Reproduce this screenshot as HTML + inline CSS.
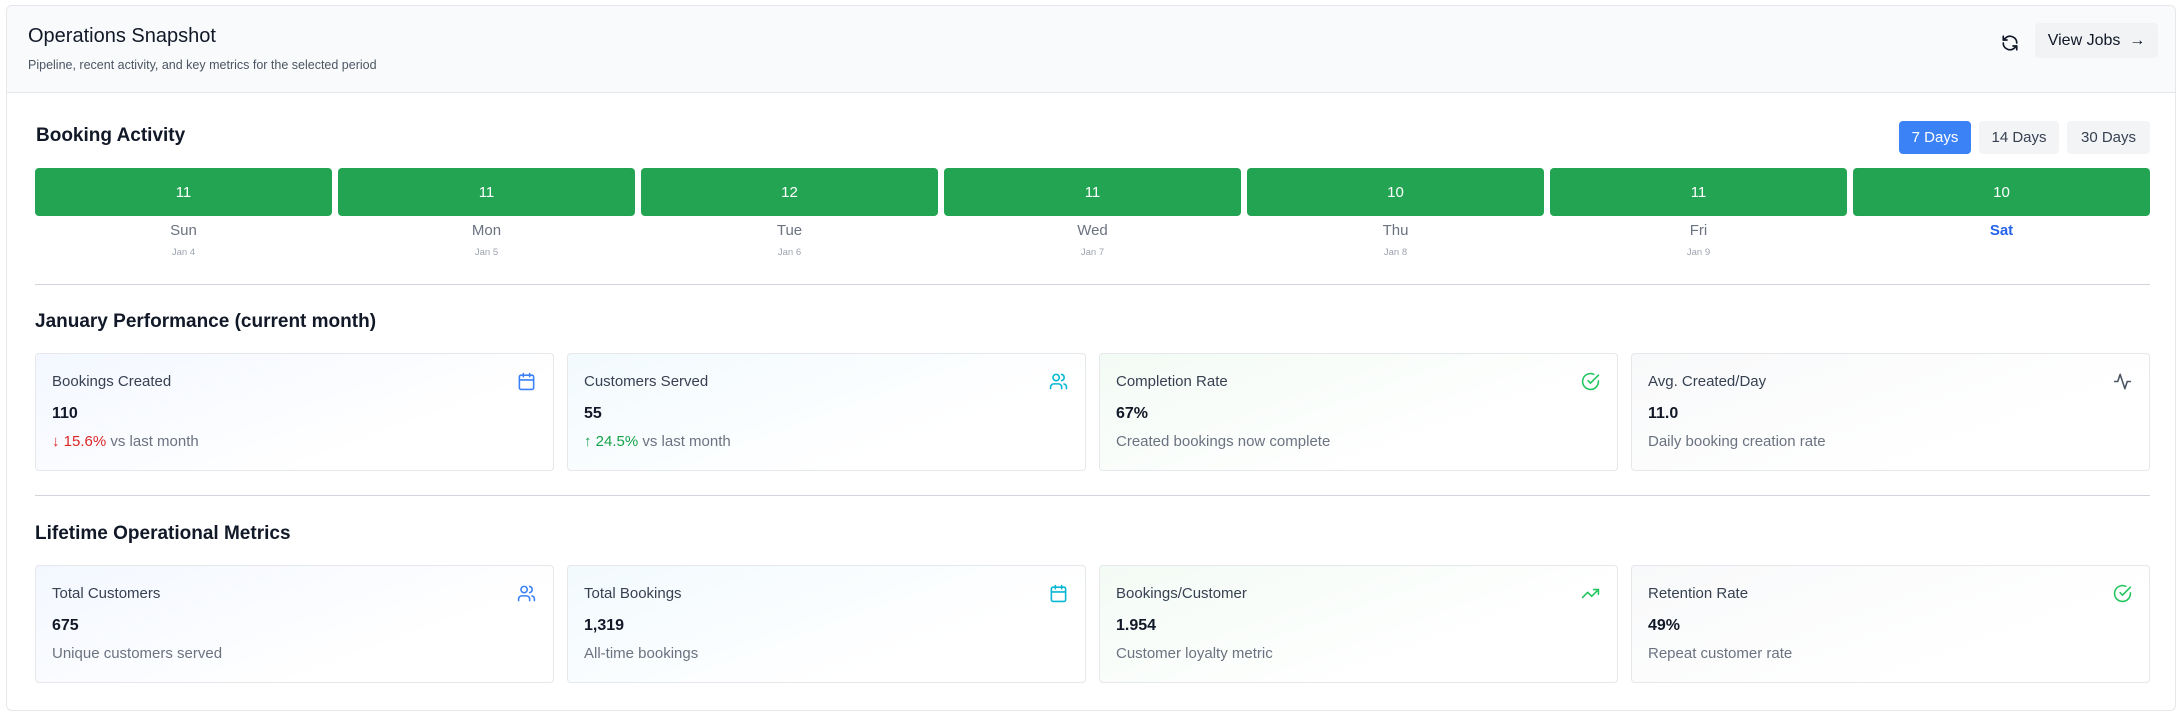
<!DOCTYPE html>
<html><head><meta charset="utf-8"><style>
*{box-sizing:border-box;margin:0;padding:0}
body{width:2182px;height:716px;background:#fff;font-family:"Liberation Sans",sans-serif;color:#111827;position:relative;overflow:hidden}
.outer{position:absolute;left:6px;top:5px;width:2170px;height:706px;border:1px solid #e5e7eb;border-radius:6px;overflow:hidden}
.hdr{position:absolute;left:0;top:0;right:0;height:87px;background:#f9fafb;border-bottom:1px solid #e5e7eb}
.abs{position:absolute}
.h1{font-size:20px;color:#111827}
.sub{font-size:12.5px;color:#4b5563}
.sec{font-size:19px;font-weight:bold;color:#111827}
.btn{position:absolute;height:33px;border-radius:4px;font-size:15px;display:flex;align-items:center;justify-content:center}
.bar{position:absolute;top:168px;height:48px;width:297px;background:#23a452;border-radius:4px;color:#fff;font-size:15px;display:flex;align-items:center;justify-content:center}
.day{position:absolute;top:222px;width:297px;text-align:center;font-size:15px;color:#6b7280}
.dt{position:absolute;top:247px;width:297px;text-align:center;font-size:9.5px;color:#9ca3af}
.div{position:absolute;left:35px;width:2115px;height:1px;background:#d1d5db}
.card{position:absolute;width:519px;height:118px;border:1px solid #e5e7eb;border-radius:4px}
.card .l{position:absolute;left:16px;top:19px;font-size:15px;color:#374151}
.card .v{position:absolute;left:16px;top:51px;font-size:16px;font-weight:bold;color:#111827}
.card .s{position:absolute;left:16px;top:79px;font-size:15px;color:#6b7280}
.card svg{position:absolute;right:17px;top:18px}
</style></head><body>
<div class="outer">
 <div class="hdr">
  <div class="abs h1" style="left:21px;top:19px">Operations Snapshot</div>
  <div class="abs sub" style="left:21px;top:52px">Pipeline, recent activity, and key metrics for the selected period</div>
  <svg class="abs" style="left:1994px;top:28px" width="18" height="18" viewBox="0 0 24 24" fill="none" stroke="#111827" stroke-width="2.2" stroke-linecap="round" stroke-linejoin="round"><path d="M21 12a9 9 0 0 0-15-6.7L3 8"/><path d="M3 3v5h5"/><path d="M3 12a9 9 0 0 0 15 6.7L21 16"/><path d="M16 16h5v5"/></svg>
  <div class="btn" style="left:2028px;top:17px;width:123px;height:35px;background:#f1f3f5;color:#111827;font-size:16px">View Jobs&nbsp;&nbsp;→</div>
 </div>
 <div class="abs sec" style="left:29px;top:119px">Booking Activity</div>
 <div class="btn" style="left:1892px;top:115px;width:72px;background:#3b82f6;color:#fff">7 Days</div>
 <div class="btn" style="left:1972px;top:115px;width:80px;background:#f3f4f6;color:#374151">14 Days</div>
 <div class="btn" style="left:2060px;top:115px;width:83px;background:#f3f4f6;color:#374151">30 Days</div>
</div>
<div class="bar" style="left:35px">11</div>
<div class="bar" style="left:338px">11</div>
<div class="bar" style="left:641px">12</div>
<div class="bar" style="left:944px">11</div>
<div class="bar" style="left:1247px">10</div>
<div class="bar" style="left:1550px">11</div>
<div class="bar" style="left:1853px">10</div>
<div class="day" style="left:35px">Sun</div><div class="dt" style="left:35px">Jan 4</div>
<div class="day" style="left:338px">Mon</div><div class="dt" style="left:338px">Jan 5</div>
<div class="day" style="left:641px">Tue</div><div class="dt" style="left:641px">Jan 6</div>
<div class="day" style="left:944px">Wed</div><div class="dt" style="left:944px">Jan 7</div>
<div class="day" style="left:1247px">Thu</div><div class="dt" style="left:1247px">Jan 8</div>
<div class="day" style="left:1550px">Fri</div><div class="dt" style="left:1550px">Jan 9</div>
<div class="day" style="left:1853px;color:#2563eb;font-weight:bold">Sat</div>
<div class="div" style="top:284px"></div>
<div class="abs sec" style="left:35px;top:311px">January Performance (current month)</div>
<div class="card" style="left:35px;top:353px;background:linear-gradient(160deg,#f3f7ff,#fff 70%)"><div class="l">Bookings Created</div><div class="v">110</div><div class="s"><span style="color:#dc2626">↓ 15.6%</span> vs last month</div>
<svg width="19" height="19" viewBox="0 0 24 24" fill="none" stroke="#3b82f6" stroke-width="2" stroke-linecap="round"><rect x="3" y="4" width="18" height="18" rx="2"/><path d="M16 2v4M8 2v4M3 10h18"/></svg></div>
<div class="card" style="left:567px;top:353px;background:linear-gradient(160deg,#f2fafe,#fff 70%)"><div class="l">Customers Served</div><div class="v">55</div><div class="s"><span style="color:#16a34a">↑ 24.5%</span> vs last month</div>
<svg width="19" height="19" viewBox="0 0 24 24" fill="none" stroke="#06b6d4" stroke-width="2" stroke-linecap="round"><path d="M16 21v-2a4 4 0 0 0-4-4H6a4 4 0 0 0-4 4v2"/><circle cx="9" cy="7" r="4"/><path d="M22 21v-2a4 4 0 0 0-3-3.9M16 3.1a4 4 0 0 1 0 7.8"/></svg></div>
<div class="card" style="left:1099px;top:353px;background:linear-gradient(160deg,#f3fbf5,#fff 70%)"><div class="l">Completion Rate</div><div class="v">67%</div><div class="s">Created bookings now complete</div>
<svg width="19" height="19" viewBox="0 0 24 24" fill="none" stroke="#22c55e" stroke-width="2" stroke-linecap="round"><path d="M22 11.1V12a10 10 0 1 1-5.9-9.1"/><path d="M22 4 12 14l-3-3"/></svg></div>
<div class="card" style="left:1631px;top:353px;background:linear-gradient(160deg,#f8f9fa,#fff 70%)"><div class="l">Avg. Created/Day</div><div class="v">11.0</div><div class="s">Daily booking creation rate</div>
<svg width="19" height="19" viewBox="0 0 24 24" fill="none" stroke="#4b5563" stroke-width="2" stroke-linecap="round" stroke-linejoin="round"><path d="M22 12h-4l-3 9L9 3l-3 9H2"/></svg></div>
<div class="div" style="top:495px"></div>
<div class="abs sec" style="left:35px;top:523px">Lifetime Operational Metrics</div>
<div class="card" style="left:35px;top:565px;background:linear-gradient(160deg,#f3f7ff,#fff 70%)"><div class="l">Total Customers</div><div class="v">675</div><div class="s">Unique customers served</div>
<svg width="19" height="19" viewBox="0 0 24 24" fill="none" stroke="#3b82f6" stroke-width="2" stroke-linecap="round"><path d="M16 21v-2a4 4 0 0 0-4-4H6a4 4 0 0 0-4 4v2"/><circle cx="9" cy="7" r="4"/><path d="M22 21v-2a4 4 0 0 0-3-3.9M16 3.1a4 4 0 0 1 0 7.8"/></svg></div>
<div class="card" style="left:567px;top:565px;background:linear-gradient(160deg,#f2fafe,#fff 70%)"><div class="l">Total Bookings</div><div class="v">1,319</div><div class="s">All-time bookings</div>
<svg width="19" height="19" viewBox="0 0 24 24" fill="none" stroke="#06b6d4" stroke-width="2" stroke-linecap="round"><rect x="3" y="4" width="18" height="18" rx="2"/><path d="M16 2v4M8 2v4M3 10h18"/></svg></div>
<div class="card" style="left:1099px;top:565px;background:linear-gradient(160deg,#f3fbf5,#fff 70%)"><div class="l">Bookings/Customer</div><div class="v">1.954</div><div class="s">Customer loyalty metric</div>
<svg width="19" height="19" viewBox="0 0 24 24" fill="none" stroke="#22c55e" stroke-width="2" stroke-linecap="round" stroke-linejoin="round"><path d="M22 7 13.5 15.5 8.5 10.5 2 17"/><path d="M16 7h6v6"/></svg></div>
<div class="card" style="left:1631px;top:565px;background:linear-gradient(160deg,#f8f9fa,#fff 70%)"><div class="l">Retention Rate</div><div class="v">49%</div><div class="s">Repeat customer rate</div>
<svg width="19" height="19" viewBox="0 0 24 24" fill="none" stroke="#22c55e" stroke-width="2" stroke-linecap="round"><path d="M22 11.1V12a10 10 0 1 1-5.9-9.1"/><path d="M22 4 12 14l-3-3"/></svg></div>
</body></html>
